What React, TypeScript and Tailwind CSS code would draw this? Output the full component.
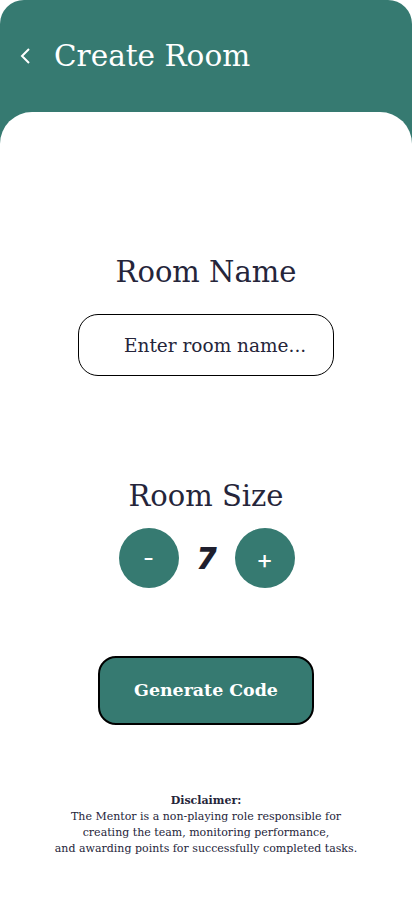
import React from "react";

export default function App() {
  const [size, setSize] = React.useState(7);
  return (
    <div className="min-h-screen w-full bg-white" style={{ fontFamily: '"DejaVu Serif", serif' }}>
      <div className="flex min-h-[917px] flex-col rounded-t-[24px] bg-[#367a71]">
        <div className="flex h-[112px] items-start pl-[18px] pt-[36px]">
          <button className="mr-[20px] mt-[10px] text-white">
            <svg width="16" height="20" viewBox="0 0 16 20" fill="none" stroke="white" strokeWidth="2">
              <path d="M11 3 L4 10 L11 17" />
            </svg>
          </button>
          <h1 className="text-[29.5px] leading-[40px] text-white">Create Room</h1>
        </div>
        <div className="flex flex-1 flex-col items-center rounded-t-[32px] bg-white">
          <h2 className="mt-[140px] text-[29px] leading-[40px] text-[#25253a]">Room Name</h2>
          <input
            placeholder="Enter room name..."
            className="mt-[22px] h-[62px] w-[256px] rounded-[20px] border border-black pl-[45px] text-[18.5px] text-[#25253a] outline-none placeholder:text-[#25253a]"
          />
          <h2 className="mt-[100px] text-[29px] leading-[40px] text-[#25253a]">Room Size</h2>
          <div className="mt-[12px] flex items-center">
            <button
              onClick={() => setSize(Math.max(1, size - 1))}
              className="ml-[1px] flex h-[60px] w-[60px] items-center justify-center rounded-full bg-[#367a71] text-[24px] text-white"
              style={{ fontFamily: '"Inter", sans-serif' }}
            >
              -
            </button>
            <span
              className="w-[56px] text-center text-[30px] font-black italic text-[#1f1f2e]"
              style={{ fontFamily: '"Inter", sans-serif' }}
            >
              {size}
            </span>
            <button
              onClick={() => setSize(size + 1)}
              className="flex h-[60px] w-[60px] items-center justify-center rounded-full bg-[#367a71] text-[26px] text-white"
              style={{ fontFamily: '"Inter", sans-serif' }}
            >
              +
            </button>
          </div>
          <button className="mt-[68px] h-[69px] w-[216px] rounded-[18px] border-2 border-black bg-[#367a71] text-[17.4px] font-bold text-white">
            Generate Code
          </button>
          <div className="mt-[68px] text-center text-[11px] leading-[16px] text-[#25253a]">
            <p className="font-bold">Disclaimer:</p>
            <p>The Mentor is a non-playing role responsible for</p>
            <p>creating the team, monitoring performance,</p>
            <p>and awarding points for successfully completed tasks.</p>
          </div>
        </div>
      </div>
    </div>
  );
}
